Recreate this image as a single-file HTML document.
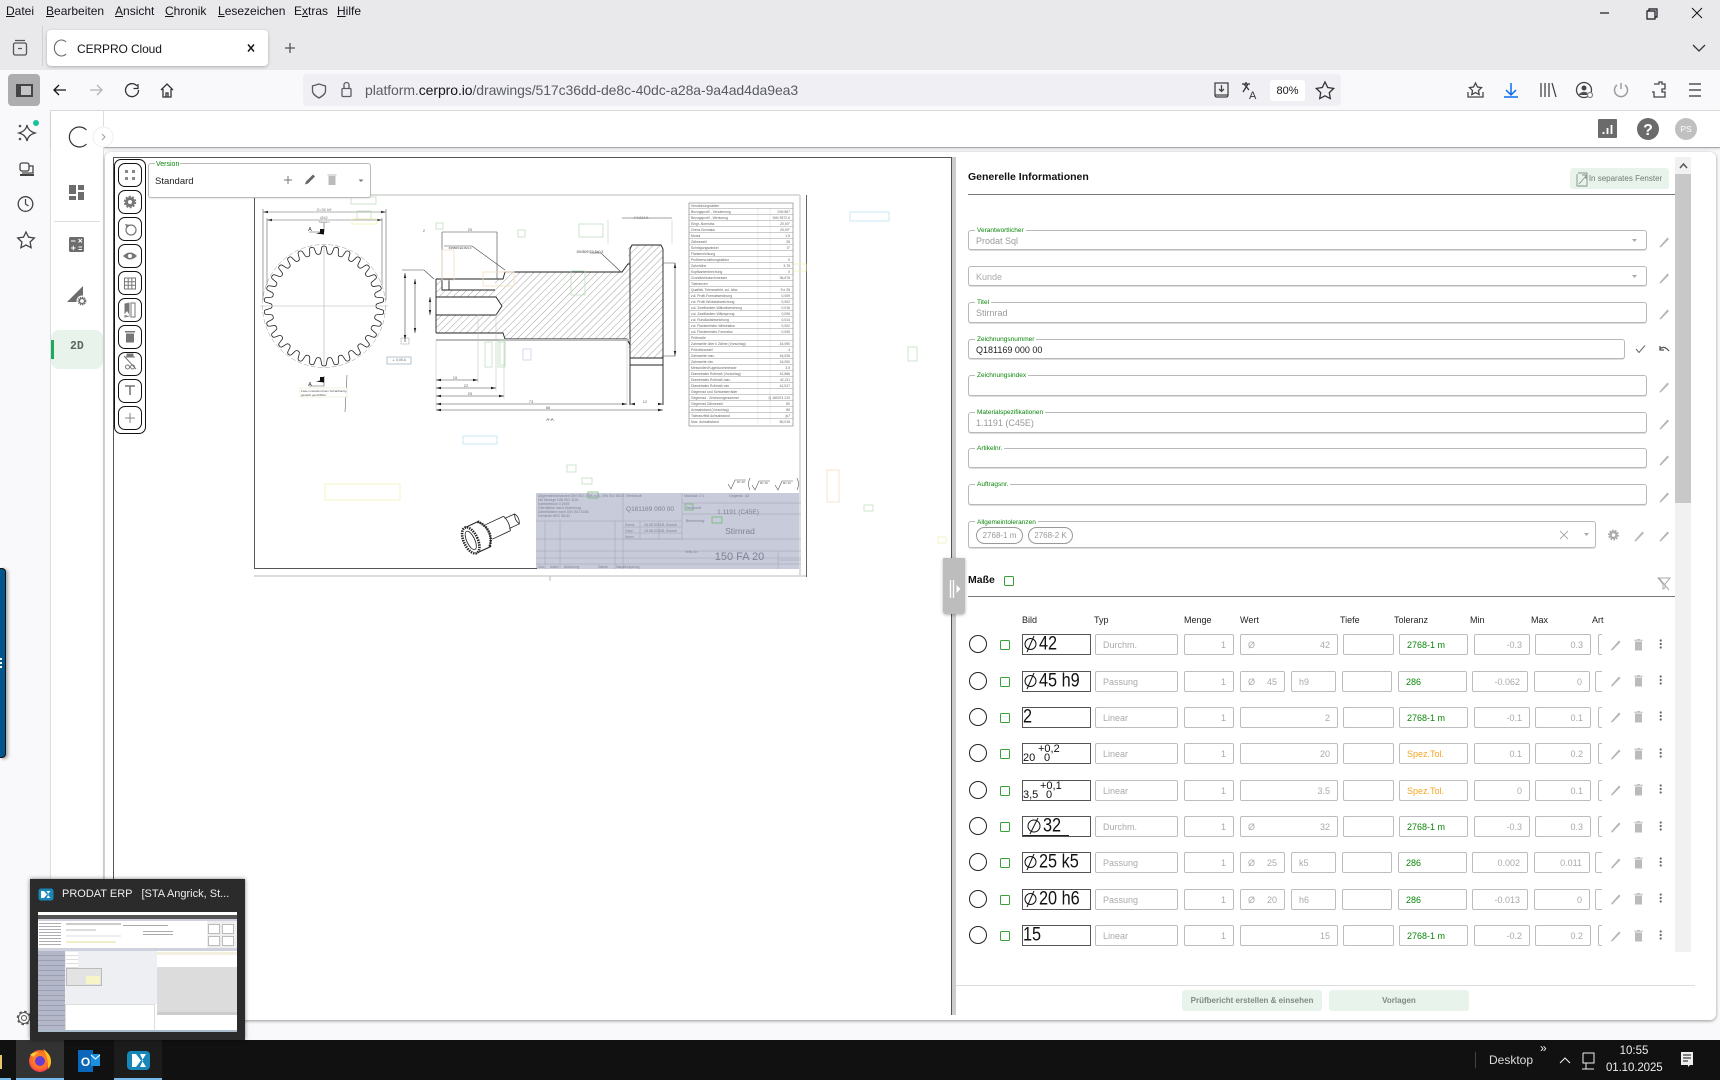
<!DOCTYPE html>
<html lang="de"><head><meta charset="utf-8"><title>CERPRO Cloud</title>
<style>
*{box-sizing:border-box}
html,body{margin:0;padding:0}
body{width:1720px;height:1080px;position:relative;overflow:hidden;background:#f9f9fb;font-family:"Liberation Sans",sans-serif;color:#222}
div,span.a{position:absolute}
.m{top:4px;font-size:12px;line-height:15px;color:#15141a}
.m u{text-decoration:underline}
.fld{left:968px;width:679px;border:1px solid #b9b9b9;border-radius:3px;background:#fff;font-size:9px;line-height:21px;padding-left:7px;color:#9a9a9a;box-shadow:0 1px 0 #ddd}
.fld i{position:absolute;left:6px;top:-4px;background:#fff;padding:0 2px;font-style:normal;font-size:6.5px;line-height:8px;color:#0a850a;white-space:nowrap}
.h{top:615px;font-size:9px;line-height:11px;color:#222}
.r{left:0;width:1720px;height:21px}
.b{top:0;height:21px;border:1px solid #bdbdbd;border-radius:2px;background:#fff;font-size:9px;line-height:20px;color:#aaa;padding:0 7px;white-space:nowrap;overflow:hidden}
.rt{text-align:right}
.ty{left:1095px;width:83px}.me{left:1184px;width:50px}.we{left:1240px;width:98px}.ti{left:1343px;width:51px}
.to{left:1399px;width:69px;color:#0a850a}.mi{left:1474px;width:56px}.ma{left:1535px;width:56px}
.w1{left:1240px;width:45px}.w2{left:1291px;width:45px}.t2{left:1342px;width:50px}.o2{left:1398px;width:69px;color:#0a850a}.i2{left:1472px;width:56px}.a2{left:1534px;width:56px}
.or{color:#f5a623}
.ar{left:1598px;width:4px;border-right:0;border-radius:2px 0 0 2px;padding:0}
.ar2{left:1595px;width:7px;border-right:0;border-radius:2px 0 0 2px;padding:0}
.im{left:1022px;width:69px;top:0;height:21px;border:1px solid #555;background:#fff;color:#111;overflow:hidden}
.im span{position:absolute;white-space:nowrap;font-size:17.5px;line-height:18px;top:-1px;transform:scale(.93,1.1);transform-origin:0 50%}
.im em{position:absolute;font-style:normal;white-space:nowrap;font-size:11px;line-height:11px}
.im svg{position:absolute;left:0;top:0}
.ci{left:969px;top:1px;width:18px;height:18px;border:1.3px solid #222;border-radius:50%;background:#fff}
.ck{left:1000px;top:6px;width:10px;height:10px;border:1.5px solid #3aa03a;border-radius:1.5px}
.ic{position:absolute}
.gb{background:#e8f3ec;border-radius:3px;color:#7f8a84;font-weight:bold;font-size:8px;text-align:center;line-height:21px}
</style></head><body>

<!-- browser chrome -->
<div style="left:0;top:0;width:1720px;height:70px;background:#e9e9ec"></div>
<div class="m" style="left:6px"><u>D</u>atei</div>
<div class="m" style="left:46px"><u>B</u>earbeiten</div>
<div class="m" style="left:115px"><u>A</u>nsicht</div>
<div class="m" style="left:165px"><u>C</u>hronik</div>
<div class="m" style="left:218px"><u>L</u>esezeichen</div>
<div class="m" style="left:294px">E<u>x</u>tras</div>
<div class="m" style="left:337px"><u>H</u>ilfe</div>
<div style="left:42px;top:26px;width:1px;height:40px;background:#cfcfd4"></div>
<div style="left:47px;top:30px;width:221px;height:36px;background:#fff;border-radius:4px;box-shadow:0 1px 3px rgba(0,0,0,.25)"></div>
<div style="left:77px;top:41px;font-size:12px;line-height:16px;color:#15141a;letter-spacing:-.1px">CERPRO Cloud</div>
<div style="left:0;top:70px;width:1720px;height:40px;background:#f9f9fb"></div>
<div style="left:8px;top:74px;width:32px;height:32px;background:#adadb0;border-radius:4px"></div>
<div style="left:303px;top:74px;width:1038px;height:32px;background:#f0f0f4;border-radius:4px"></div>
<div style="left:365px;top:82px;font-size:14px;line-height:17px;color:#5b5b66;white-space:nowrap;letter-spacing:-.08px">platform.<span style="color:#15141a">cerpro.io</span>/drawings/517c36dd-de8c-40dc-a28a-9a4ad4da9ea3</div>
<div style="left:1270px;top:80px;width:35px;height:21px;background:#fff;border-radius:3px;font-size:11px;line-height:22px;text-align:center;color:#15141a">80%</div>

<!-- page -->
<div style="left:50px;top:110px;width:1670px;height:930px;background:#f9f9fb;border-left:1px solid #ddd;border-top:1px solid #ddd"></div>
<div style="left:51px;top:111px;width:1669px;height:37px;background:#fff;border-bottom:1px solid #aaa;box-shadow:0 1px 2px rgba(0,0,0,.15)"></div>
<div style="left:51px;top:111px;width:53px;height:929px;background:#fff;border-right:1px solid #ddd"></div>
<div style="left:54px;top:221px;width:46px;height:1px;background:#ddd"></div>
<div style="left:51px;top:330px;width:52px;height:39px;background:#e8f3ec;border-radius:8px"></div>
<div style="left:51px;top:340px;width:3px;height:19px;background:#1fa860"></div>
<div style="left:70px;top:340px;font-size:11.5px;font-weight:bold;line-height:14px;color:#5a6660;font-family:'Liberation Mono',monospace">2D</div>
<div style="left:105px;top:152px;width:1611px;height:868px;background:#fff;border-radius:6px;box-shadow:0 1px 3px rgba(0,0,0,.4)"></div>
<div style="left:113px;top:157px;width:839px;height:858px;background:#fff;border:1px solid #555;border-bottom:0"></div>
<div style="left:952px;top:157px;width:4px;height:858px;background:#ccc"></div>

<!-- drawing title block backdrop -->
<div style="left:536px;top:493px;width:265px;height:76px;background:#c8cbda"></div>

<!-- Toolbar capsule -->
<div style="left:114px;top:159px;width:32px;height:275px;border:1.5px solid #111;border-radius:7px;background:#fff"></div>
<div style="left:118px;top:163px;width:24px;height:24px;border:1.2px solid #111;border-radius:7px"></div>
<div style="left:118px;top:190px;width:24px;height:24px;border:1.2px solid #111;border-radius:7px"></div>
<div style="left:118px;top:217px;width:24px;height:24px;border:1.2px solid #111;border-radius:7px"></div>
<div style="left:118px;top:244px;width:24px;height:24px;border:1.2px solid #111;border-radius:7px"></div>
<div style="left:118px;top:271px;width:24px;height:24px;border:1.2px solid #111;border-radius:7px"></div>
<div style="left:118px;top:298px;width:24px;height:24px;border:1.2px solid #111;border-radius:7px"></div>
<div style="left:118px;top:325px;width:24px;height:24px;border:1.2px solid #111;border-radius:7px"></div>
<div style="left:118px;top:352px;width:24px;height:24px;border:1.2px solid #111;border-radius:7px"></div>
<div style="left:118px;top:379px;width:24px;height:24px;border:1.2px solid #111;border-radius:7px"></div>
<div style="left:118px;top:406px;width:24px;height:24px;border:1.2px solid #111;border-radius:7px"></div>

<!-- Drawing SVG -->
<svg class="ic" style="left:0;top:0" width="1720" height="1080" viewBox="0 0 1720 1080" font-family="Liberation Sans, sans-serif">
<defs>
<path id="tooth" d="M-5.44-51.7Q-3.6-51.7-3.2-53.5L-2.3-58.5Q-1.9-60 0-60Q1.9-60 2.3-58.5L3.2-53.5Q3.6-51.7 5.44-51.7" fill="none" stroke="#222" stroke-width=".8"/>
<pattern id="hat" width="5" height="5" patternUnits="userSpaceOnUse" patternTransform="rotate(45)"><line x1="0" y1="0" x2="0" y2="5" stroke="#888" stroke-width=".8"/></pattern>
<g id="pen"><path d="M-4 5L3.5-3.5 5-2-2.8 6-4.6 6.600Z" fill="#b5b5b5"/></g>
<g id="trash"><path d="M-3.5-3.5h7V5.5h-7zM-4.3-5.2h8.6v1h-8.6zM-1.4-6h2.8v1h-2.8z" fill="#bbb"/></g>
<g id="dots" fill="#666"><circle cy="-3.5" r="1.1"/><circle r="1.1"/><circle cy="3.5" r="1.1"/></g>
<g id="car"><path d="M-2.5-1h5L0 2Z" fill="#aaa"/></g>
</defs>

<!-- sheet frame -->
<path d="M254 195H800M800 195V576M254 576H806" stroke="#ddd" stroke-width="2" fill="none"/>
<path d="M806.5 195V577" stroke="#666" stroke-width="1"/>
<path d="M254.5 195V568.5H537" stroke="#555" stroke-width="1" fill="none"/>
<path d="M550 576v5" stroke="#bbb"/>

<!-- gear -->
<g transform="translate(324 306)">
<use href="#tooth"/><use href="#tooth" transform="rotate(12)"/><use href="#tooth" transform="rotate(24)"/><use href="#tooth" transform="rotate(36)"/><use href="#tooth" transform="rotate(48)"/><use href="#tooth" transform="rotate(60)"/><use href="#tooth" transform="rotate(72)"/><use href="#tooth" transform="rotate(84)"/><use href="#tooth" transform="rotate(96)"/><use href="#tooth" transform="rotate(108)"/><use href="#tooth" transform="rotate(120)"/><use href="#tooth" transform="rotate(132)"/><use href="#tooth" transform="rotate(144)"/><use href="#tooth" transform="rotate(156)"/><use href="#tooth" transform="rotate(168)"/><use href="#tooth" transform="rotate(180)"/><use href="#tooth" transform="rotate(192)"/><use href="#tooth" transform="rotate(204)"/><use href="#tooth" transform="rotate(216)"/><use href="#tooth" transform="rotate(228)"/><use href="#tooth" transform="rotate(240)"/><use href="#tooth" transform="rotate(252)"/><use href="#tooth" transform="rotate(264)"/><use href="#tooth" transform="rotate(276)"/><use href="#tooth" transform="rotate(288)"/><use href="#tooth" transform="rotate(300)"/><use href="#tooth" transform="rotate(312)"/><use href="#tooth" transform="rotate(324)"/><use href="#tooth" transform="rotate(336)"/><use href="#tooth" transform="rotate(348)"/>
<circle r="61.5" fill="none" stroke="#999" stroke-width=".5" stroke-dasharray="5 2"/>
<path d="M-64 0H64" stroke="#ccc" stroke-width=".8"/><path d="M0-60V60" stroke="#bbb" stroke-width=".7"/>
</g>
<g stroke="#666" stroke-width=".6" fill="none">
<path d="M263 212H386M263 209V300M386 209V300"/>
<path d="M267 220H382M267 218V285"/><path d="M382 218V285"/>
<path d="M309 232h15v-10M324 376v10h-15" stroke="#555"/>
<path d="M347 375l-2 37"/>
</g>
<path d="M263 212l5-1.200v2.400zM386 212l-5-1.200v2.400zM267 220l5-1.200v2.400zM382 220l-5-1.200v2.400z" fill="#333"/>
<path d="M316 233.5l8-2v3zM316 381.5l8-2v3z" fill="#111"/><rect x="320" y="229" width="4" height="5" fill="#111"/><rect x="320" y="377" width="4" height="5" fill="#111"/>
<g font-size="4" fill="#777" text-anchor="middle">
<text x="324" y="211">Z=30 h9</text><text x="324" y="219">Ø42</text><text x="324" y="223" font-size="3">Toleranz</text>
<text x="310" y="231" font-size="5.500" fill="#333">A</text><text x="310" y="386" font-size="5.500" fill="#333">A</text>
</g>
<rect x="300" y="388" width="47" height="9" fill="#fff" stroke="#e6e8c8" stroke-width=".6"/>
<text x="301" y="392" font-size="3" fill="#555">Fase umlaufend kein Scharfkantig</text><text x="301" y="396" font-size="3" fill="#555">gewalzt geschliffen</text>

<!-- shaft -->
<path d="M436 279H503L505 272H622L628 264V245H663V358H630L627 339H505L503 333H436V315H496L502 306 496 297H436Z" fill="url(#hat)" stroke="none"/>
<path d="M442 279H495V290H442Z" fill="#fff"/>
<path d="M436 279V333M436 279H503L505 272H622L628 264H630V249L632 245H661L663 249V358M630 264V405M663 358V405M630 358H663M630 365H663M436 333H503L505 339H627L630 345M436 297H496L502 306 496 315H436M442 279V290H495M449 279V290" fill="none" stroke="#222" stroke-width=".9"/>
<path d="M436 340H630" stroke="#bbb" stroke-width="2"/>
<path d="M436 340V410M478 314V383M496 314V391M504 340V399M627 340V405M608 220v24M672 220v24" stroke="#bbb" stroke-width=".5" fill="none"/>
<g stroke="#444" stroke-width=".6" fill="none">
<path d="M436 380H478M436 388H496M436 396H504M436 404H627M436 410H663"/>
<path d="M405 273V340M415 279V333M430 297V315"/>
<path d="M442 232H497M442 232V279M497 232V279"/>
<path d="M402 270h22l10 9M444 246H472L505 270M590 253h11L621 272M663 263h12v93h-12"/>
<path d="M622 218H672"/>
</g>
<path d="M436 380l5-1.200v2.400zM478 380l-5-1.200v2.400zM436 388l5-1.200v2.400zM496 388l-5-1.200v2.400zM436 396l5-1.200v2.400zM504 396l-5-1.200v2.400zM436 404l5-1.200v2.400zM627 404l-5-1.200v2.400zM436 410l5-1.200v2.400zM663 410l-5-1.200v2.400zM630 404l5-1.200v2.400zM663 404l-5-1.200v2.400zM405 273l-1.200 5h2.400zM405 340l-1.200-5h2.400zM415 279l-1.200 5h2.400zM415 333l-1.200-5h2.400zM430 297l-1.200 5h2.400zM430 315l-1.200-5h2.400zM675 263l-1.200 5h2.400zM675 356l-1.200-5h2.400z" fill="#222"/>
<g font-size="4" fill="#666" text-anchor="middle">
<text x="455" y="379">15</text><text x="466" y="387">22</text><text x="470" y="395">25</text><text x="531" y="403">73</text><text x="548" y="409">88</text><text x="550" y="421" font-size="4.500" fill="#444">A-A</text>
<text x="645" y="403">12</text><text x="424" y="232">2</text><text x="470" y="231">20</text>
<text x="641" y="219" font-size="3.500">// 0,014 A</text><text x="590" y="253" font-size="3.500" fill="#444">DIN509 E0,8x0,3</text><text x="460" y="249" font-size="3" fill="#444">DIN509 E0,8x0,3</text>
<text x="399" y="361" font-size="3.500">⊥ 0,05 A</text><text x="405" y="342" font-size="3.500">A</text>
</g>
<rect x="387" y="357" width="24" height="7" fill="none" stroke="#6a8ca0" stroke-width=".5"/><rect x="401" y="338" width="8" height="6" fill="none" stroke="#888" stroke-width=".4"/>

<!-- colored annotation outlines -->
<g fill="none" stroke-width=".8">
<g stroke="#bfe0bf"><rect x="351" y="197" width="25" height="7"/><rect x="357" y="211" width="14" height="8"/><rect x="518" y="230" width="7" height="7"/><rect x="579" y="224" width="24" height="13"/><rect x="571" y="271" width="14" height="24"/><rect x="500" y="340" width="5" height="25"/><rect x="485" y="342" width="7" height="25"/><rect x="498" y="342" width="7" height="25"/><rect x="567" y="465" width="9" height="7"/><rect x="582" y="478" width="10" height="6"/><rect x="864" y="505" width="9" height="6"/><rect x="908" y="347" width="9" height="14"/><rect x="436" y="223" width="7" height="6"/></g>
<g stroke="#6fb96f"><rect x="588" y="492" width="10" height="6"/><rect x="685" y="504" width="8" height="6"/><rect x="712" y="517" width="10" height="6"/></g>
<g stroke="#bfe2f2"><rect x="850" y="212" width="39" height="9"/><rect x="463" y="436" width="34" height="8"/></g>
<g stroke="#f4f0b8"><rect x="325" y="484" width="75" height="16"/><rect x="352" y="219" width="25" height="5"/><rect x="938" y="537" width="8" height="6"/><rect x="758" y="264" width="48" height="7"/></g>
<g stroke="#f3dfc0"><rect x="827" y="470" width="12" height="32"/><rect x="442" y="250" width="12" height="30"/><rect x="483" y="272" width="31" height="14"/></g>
<g stroke="#dcc8ec"><rect x="523" y="349" width="8" height="11"/></g>
</g>

<!-- data table -->
<g>
<rect x="689" y="203" width="104" height="223" fill="#fff" stroke="#777" stroke-width=".6"/>
<path d="M758 208V426M770 208V426" stroke="#ddd" stroke-width=".5"/>
<path d="M689 208.500H793M689 214.500H793M689 220.500H793M689 226.500H793M689 232.500H793M689 238.500H793M689 244.500H793M689 250.500H793M689 256.500H793M689 262.500H793M689 268.500H793M689 274.500H793M689 280.500H793M689 286.500H793M689 292.500H793M689 298.500H793M689 304.500H793M689 310.500H793M689 316.500H793M689 322.500H793M689 328.500H793M689 334.500H793M689 340.500H793M689 346.500H793M689 352.500H793M689 358.500H793M689 364.500H793M689 370.500H793M689 376.500H793M689 382.500H793M689 388.500H793M689 394.500H793M689 400.500H793M689 406.500H793M689 412.500H793M689 418.500H793" stroke="#999" stroke-width=".5"/>
<text font-size="3.400" fill="#666"><tspan x="691" y="207">Verzahnungsdaten</tspan><tspan x="691" dy="6">Bezugsprofil - Verzahnung</tspan><tspan x="691" dy="6">Bezugsprofil - Werkzeug</tspan><tspan x="691" dy="6">Eingr.-Normalw.</tspan><tspan x="691" dy="6">Grenz-Normalw.</tspan><tspan x="691" dy="6">Modul</tspan><tspan x="691" dy="6">Zähnezahl</tspan><tspan x="691" dy="6">Schrägungswinkel</tspan><tspan x="691" dy="6">Flankenrichtung</tspan><tspan x="691" dy="6">Profilverschiebungsfaktor</tspan><tspan x="691" dy="6">Zahnhöhe</tspan><tspan x="691" dy="6">Kopfkantenbrechung</tspan><tspan x="691" dy="6">Grundkreisdurchmesser</tspan><tspan x="691" dy="6">Toleranzen</tspan><tspan x="691" dy="6">Qualität, Toleranzfeld, zul. Abw.</tspan><tspan x="691" dy="6">zul. Profil-Formabweichung</tspan><tspan x="691" dy="6">zul. Profil-Winkelabweichung</tspan><tspan x="691" dy="6">zul. Zweiflanken-Wälzabweichung</tspan><tspan x="691" dy="6">zul. Zweiflanken-Wälzsprung</tspan><tspan x="691" dy="6">zul. Rundlaufabweichung</tspan><tspan x="691" dy="6">zul. Flankenlinien-Winkelabw.</tspan><tspan x="691" dy="6">zul. Flankenlinien-Formabw.</tspan><tspan x="691" dy="6">Prüfmaße</tspan><tspan x="691" dy="6">Zahnweite über k Zähne (Vorschlag)</tspan><tspan x="691" dy="6">Prüfzähnezahl</tspan><tspan x="691" dy="6">Zahnweite max.</tspan><tspan x="691" dy="6">Zahnweite min.</tspan><tspan x="691" dy="6">Messrollen/Kugeldurchmesser</tspan><tspan x="691" dy="6">Diametrales Rollmaß (Vorschlag)</tspan><tspan x="691" dy="6">Diametrales Rollmaß max.</tspan><tspan x="691" dy="6">Diametrales Rollmaß min.</tspan><tspan x="691" dy="6">Gegenrad und Schwesterräder</tspan><tspan x="691" dy="6">Gegenrad - Zeichnungsnummer</tspan><tspan x="691" dy="6">Gegenrad Zähnezahl</tspan><tspan x="691" dy="6">Achsabstand (Vorschlag)</tspan><tspan x="691" dy="6">Toleranzfeld Achsabstand</tspan><tspan x="691" dy="6">Max. Achsabstand</tspan></text>
<text font-size="3.400" fill="#666" text-anchor="end"><tspan x="790" y="213">DIN 867</tspan><tspan x="790" dy="6">DIN 3972-II</tspan><tspan x="790" dy="6">20,00°</tspan><tspan x="790" dy="6">20,00°</tspan><tspan x="790" dy="6">1,5</tspan><tspan x="790" dy="6">26</tspan><tspan x="790" dy="6">0°</tspan><tspan x="790" dy="6">-</tspan><tspan x="790" dy="6">0</tspan><tspan x="790" dy="6">3,75</tspan><tspan x="790" dy="6">0</tspan><tspan x="790" dy="6">36,676</tspan><tspan x="790" dy="12">9 e 25</tspan><tspan x="790" dy="6">0,009</tspan><tspan x="790" dy="6">0,002</tspan><tspan x="790" dy="6">0,016</tspan><tspan x="790" dy="6">0,006</tspan><tspan x="790" dy="6">0,014</tspan><tspan x="790" dy="6">0,002</tspan><tspan x="790" dy="6">0,005</tspan><tspan x="790" dy="12">16,090</tspan><tspan x="790" dy="6">4</tspan><tspan x="790" dy="6">16,026</tspan><tspan x="790" dy="6">16,000</tspan><tspan x="790" dy="6">3,5</tspan><tspan x="790" dy="6">42,886</tspan><tspan x="790" dy="6">42,211</tspan><tspan x="790" dy="6">41,517</tspan><tspan x="790" dy="12">Q 180374 210</tspan><tspan x="790" dy="6">80</tspan><tspan x="790" dy="6">80</tspan><tspan x="790" dy="6">js7</tspan><tspan x="790" dy="6">80,015</tspan></text>
</g>

<!-- surface symbols -->
<g stroke="#555" stroke-width=".6" fill="none"><path d="M728 484l3 5 4-9h11M752 485l3 5 4-9h11M775 485l3 5 4-9h11M750 478q-3 6 0 12M797 478q3 6 0 12"/></g>
<g font-size="3" fill="#555"><text x="737" y="483">Rz 40</text><text x="760" y="484">Rz 16</text><text x="783" y="484">Rz 10</text></g>

<!-- pinion -->
<g transform="translate(478 537) rotate(-25)" fill="none" stroke="#222" stroke-width=".8">
<path d="M-8-14H6Q12-8 12 0T6 14H-8Z" fill="#fff"/>
<path d="M6-14Q12-8 12 0T6 14" stroke-width="2.600" stroke-dasharray="1.400 1"/>
<path d="M-8-14H6M-8 14H6M-5-14H8M-5 14H8" stroke-width="1"/>
<ellipse cx="-8" cy="0" rx="7" ry="14" fill="#fff" stroke-width="2.600" stroke-dasharray="1.400 1"/>
<ellipse cx="-8" cy="0" rx="4" ry="10"/>
<path d="M12-8H32M12 8H32M32-8Q35 0 32 8M32-5.500H43M32 5.500H43M43-5.500Q46 0 43 5.500Q40 0 43-5.500" fill="#fff"/>
</g>

<!-- title block -->
<g stroke="#9ea2b4" stroke-width=".5" fill="none"><path d="M536 539H801M623 493V569M682 493V539M536 551H801M536 558H801M536 564H801M623 539H682M545 521V569M560 521V569M615 521V569M536 521H682M659 521V539M640 521V539M623 527H682M623 533H682M682 514H801M682 503H801M778 551V569M778 560H801"/></g>
<g font-size="3.500" fill="#7f8294"><text x="538" y="497">Allgemeintoleranzen DIN ISO 2768-m-K, DIN ISO 8015 / Werkstoff:</text><text x="538" y="501">Die Bezüge DIN ISO 1101</text><text x="538" y="505">Kantenbruch 0,2x45</text><text x="538" y="509">Oberfläche nach Zeichnung</text><text x="538" y="513">Zahnflanken nach DIN ISO 6336</text><text x="538" y="517">Gehärtet HRC 58-62</text><text x="684" y="497">Maßstab: 2:1</text><text x="729" y="497">Gegenst.: A3</text><text x="686" y="509">Werkstoff:</text><text x="686" y="522">Benennung:</text><text x="685" y="553">Teile-Nr.:</text><text x="625" y="526">Konst.</text><text x="625" y="532">Gepr.</text><text x="625" y="538">Norm</text><text x="644" y="526">18.08.2016</text><text x="662" y="526">B. Brandt</text><text x="644" y="532">18.08.2016</text><text x="662" y="532">B. Brandt</text><text x="538" y="568">Zus.</text><text x="550" y="568">Index</text><text x="564" y="568">Änderung</text><text x="598" y="568">Datum</text><text x="616" y="568">Name</text><text x="625" y="568">Ursprung</text></g>
<g fill="#7f8294" text-anchor="middle"><text x="650" y="511" font-size="6.500">Q181169 000 00</text><text x="738" y="514" font-size="6.500">1.1191 (C45E)</text><text x="740" y="534" font-size="8.500">Stirnrad</text><text x="739.500" y="560" font-size="11">150 FA 20</text></g>

<!-- Chrome icons -->
<g fill="none" stroke="#5b5b66" stroke-width="1.300">
<path d="M15 40.500h10M13.500 45q0-2 2-2h9q2 0 2 2v8q0 2-2 2h-9q-2 0-2-2zM18 48.500h4" stroke="#555"/>
<rect x="17" y="85" width="15" height="11" fill="#c4c4c6" stroke="#444" stroke-width="2"/><rect x="17" y="85" width="4" height="11" fill="#444" stroke="none"/>
<path d="M66 90H54M59 85l-5 5 5 5" stroke="#15141a"/>
<path d="M90 90h12M97 85l5 5-5 5" stroke="#b4b4b8"/>
<path d="M137 86a6.500 6.500 0 1 0 1.500 4M138 84v4.500h-4.500" stroke="#333"/>
<path d="M161 90l6-6 6 6M163 89v8h8v-8M166 97v-4h2v4" stroke="#333"/>
<path d="M319 84l-6.500 2v5c0 3 3 5 6.500 7 3.500-2 6.500-4 6.500-7v-5z"/>
<rect x="342" y="88.500" width="9" height="8" rx="1"/><path d="M344 88v-3a2.500 2.500 0 0 1 5 0v3"/>
<path d="M1215 83h13v12h-13zM1215 95q0 2 2 2h9q2 0 2-2M1221.500 85v6M1219 89l2.500 2.500L1224 89" stroke="#444"/>
<path d="M1242 84h8M1246 82v2M1243 92l5-8M1244 84l5 6" stroke="#333"/>
<text x="1249" y="99" font-size="11" fill="#333" stroke="none">A</text>
<path d="M1325 82l2.700 5.500 6 .9-4.400 4.200 1 6-5.300-2.800-5.300 2.800 1-6-4.400-4.200 6-.9z" stroke="#333"/>
<path d="M1475.500 83l2 4 4 .6-3 3 .7 4-3.700-2-3.700 2 .7-4-3-3 4-.6zM1468 92v5h15v-5" stroke="#444"/>
<path d="M1511 83v11M1506 90l5 5 5-5M1504 97h14" stroke="#0b6cf0" stroke-width="1.500"/>
<path d="M1541 83v14M1545 83v14M1549 83v14M1552 83l4 14" stroke="#444"/>
<circle cx="1584" cy="90" r="7.500" stroke="#444"/><circle cx="1584" cy="88" r="2.500" fill="#444" stroke="none"/><path d="M1579 95q5-5 10 0" fill="#444"/><circle cx="1590" cy="95" r="2.500" fill="#fff" stroke="#888"/>
<path d="M1621 83v6M1617 85a6.500 6.500 0 1 0 8 0" stroke="#9c9ca0" stroke-width="1.500"/>
<path d="M1654 84h5v-2h3v2h3v5h-3v3h3v5h-11v-5h-2" stroke="#444"/>
<path d="M1689 84h12M1689 90h12M1689 96h12" stroke="#333"/>
<path d="M1600 13h9" stroke="#15141a" stroke-width="1.200"/>
<path d="M1647 11h8v8h-8zM1649 11V9h8v8h-2" stroke="#15141a" stroke-width="1.200"/>
<path d="M1692 8l10 10M1702 8l-10 10" stroke="#15141a" stroke-width="1"/>
<path d="M1693 45l6 6 6-6" stroke="#333"/>
<path d="M285 48h10M290 43v10" stroke="#555"/>
<path d="M248 44.500l6 7M254 44.500l-6 7" stroke="#15141a" stroke-width="1.500"/>
<path d="M66 42a7 8 0 1 0 0 12" stroke="#666" stroke-width="1.100"/>
</g>

<!-- firefox sidebar -->
<path d="M26 125q1 6 8 8-7 2-8 8-1-6-8-8 7-2 8-8z" fill="none" stroke="#444" stroke-width="1.300" transform="translate(1 0)"/>
<circle cx="20" cy="126" r="1.300" fill="#555"/><circle cx="20" cy="139" r="1.300" fill="#555"/><circle cx="36" cy="123" r="3" fill="#1ac19a"/>
<g fill="none" stroke="#444" stroke-width="1.300"><rect x="20" y="163" width="9" height="8" rx="2"/><path d="M29 166h4v7H22"/></g><path d="M20 174h14v2h-14z" fill="#444"/>
<circle cx="25.500" cy="204" r="7.300" fill="none" stroke="#444" stroke-width="1.300"/><path d="M25.500 199v5l3 2" fill="none" stroke="#444" stroke-width="1.200"/>
<path d="M26 232l2.500 5.200 5.800.8-4.200 4 1 5.700-5.100-2.700-5.100 2.700 1-5.700-4.200-4 5.800-.8z" fill="none" stroke="#444" stroke-width="1.300"/>

<!-- app rail -->
<path d="M86.500 130A10 10 0 1 0 86.500 144" fill="none" stroke="#333" stroke-width="1.200"/>
<circle cx="103" cy="137" r="10" fill="#fff" stroke="#eee" stroke-width="1"/><path d="M102 134l3 3-3 3" fill="none" stroke="#999" stroke-width=".9"/>
<path d="M69 185h7v9h-7zM78 185h6v5h-6zM78 192h6v8h-6zM69 196h7v4h-7z" fill="#6d6d6d"/>
<rect x="69" y="237" width="15" height="15" rx="1.500" fill="#6d6d6d"/><path d="M71 241h4.500M78.500 239l3.500 3.500M82 239l-3.500 3.500M71 248h4.500M73.300 245.800v4.400M78.500 247h3.500M78.500 249.500h3.500" stroke="#fff" stroke-width="1"/>
<path d="M67 302L83 286V298A11 11 0 0 0 78 302Z" fill="#6d6d6d"/><circle cx="82" cy="301" r="5.500" fill="#fff"/><circle cx="82" cy="301" r="3.600" fill="none" stroke="#6d6d6d" stroke-width="1.600" stroke-dasharray="1.300 .8"/><circle cx="82" cy="301" r="2.500" fill="none" stroke="#6d6d6d" stroke-width="1.200"/>

<!-- toolbar icons -->
<g fill="#777" stroke="none">
<path d="M125 170h3v3h-3zM132 170h3v3h-3zM125 177h3v3h-3zM132 177h3v3h-3z" fill="#888"/>
<circle cx="130" cy="202" r="3.500" fill="none" stroke="#777" stroke-width="3"/><circle cx="130" cy="202" r="5.500" fill="none" stroke="#777" stroke-width="1.500" stroke-dasharray="2 1.500"/>
<circle cx="131" cy="230" r="5" fill="none" stroke="#777" stroke-width="1.200"/><path d="M125 224l5 1-3 3z"/>
<path d="M123 256q7-7 14 0q-7 7-14 0z"/><circle cx="130" cy="256" r="2" fill="#fff"/>
<g fill="none" stroke="#777"><rect x="124.500" y="278" width="11" height="11"/><path d="M124.500 281.700h11M124.500 285.300h11M128.200 278v11M131.800 278v11"/></g>
<path d="M125 304l4-1v13l-4 1zM131 303h4v14h-4z" fill="none" stroke="#777"/><path d="M125 304h4v12h-4z"/><path d="M124 315l3-4 2 3v2z" fill="#fff"/>
<path d="M126 333.500h8v9h-8zM125 331h10v1.500h-10z"/>
<path d="M125 357h10M127 354h6v3h-6z" stroke="#777"/><circle cx="127.500" cy="367" r="2" fill="none" stroke="#777"/><circle cx="132.500" cy="367" r="2" fill="none" stroke="#777"/><path d="M124 356l12 13" stroke="#777" fill="none"/>
<path d="M125 386h10M130 386v9" stroke="#777" stroke-width="1.600"/>
<path d="M125 418h10M130 413v10" stroke="#888" stroke-width="1"/>
</g>

<!-- header icons -->
<rect x="1598" y="119" width="19" height="19" rx="1" fill="#6b6b6b"/><path d="M1603.500 134v-2M1607.500 134v-6M1611.500 134v-9" stroke="#fff" stroke-width="1.800"/>
<circle cx="1648" cy="129" r="11" fill="#6b6b6b"/><text x="1648" y="135" font-size="16" font-weight="bold" fill="#fff" text-anchor="middle">?</text>
<circle cx="1686" cy="129" r="11" fill="#c0c0c0"/><text x="1686" y="132" font-size="8.500" fill="#fff" text-anchor="middle">PS</text>

<!-- scrollbar -->
<rect x="1675" y="157" width="16" height="795" fill="#f1f1f1"/><rect x="1675" y="174" width="16" height="329" fill="#c8c8c8"/><path d="M1680 168l3.500-4 3.500 4" fill="none" stroke="#555" stroke-width="1.500"/>

<!-- right panel lines -->
<path d="M968 194.500H1675M968 596.500H1675" stroke="#777" stroke-width="1"/>
<path d="M956 985.500H1695" stroke="#ddd" stroke-width="1"/>
<use href="#pen" x="1664" y="241"/><use href="#pen" x="1664" y="277"/><use href="#pen" x="1664" y="313"/><use href="#pen" x="1664" y="386"/><use href="#pen" x="1664" y="423"/><use href="#pen" x="1664" y="459"/><use href="#pen" x="1664" y="496"/><use href="#pen" x="1664" y="535"/>
<path d="M1636 349l3 3.500 6-7" fill="none" stroke="#666" stroke-width="1"/>
<path d="M1660 349q4-4 9 2M1660 346v4h4" fill="none" stroke="#555" stroke-width="1.300"/>
<path d="M1658 578h12l-5 6v4l-2 1v-5zM1659 578l10 12" fill="none" stroke="#aaa" stroke-width="1"/>

<!-- gear sidebar -->
<circle cx="24" cy="1018" r="2.500" fill="none" stroke="#555" stroke-width="1"/><circle cx="24" cy="1018" r="5.500" fill="none" stroke="#555" stroke-width="1"/><circle cx="24" cy="1018" r="6.500" fill="none" stroke="#555" stroke-width="1.500" stroke-dasharray="2.500 2.600"/>
</svg>

<!-- Version box -->
<div style="left:148px;top:163px;width:223px;height:35px;background:#fff;border:1px solid #bbb;border-radius:3px;font-size:9.500px;line-height:36px;padding-left:6px;color:#222;box-shadow:0 1px 1px rgba(0,0,0,.08)">Standard<i style="position:absolute;left:6px;top:-3px;background:#fff;padding:0 1px;font-style:normal;font-size:7px;line-height:8px;color:#0a850a">Version</i></div>
<svg class="ic" style="left:280px;top:170px" width="90" height="20"><path d="M4 10h8M8 6v8" stroke="#777"/><path d="M25 14.500l1-3 7-7 2 2-7 7z" fill="#666"/><path d="M48.500 6h7V15h-7zM47.500 4.500h9v1h-9z" fill="#bbb"/><path d="M78.500 9.500h5l-2.500 2.500z" fill="#777"/></svg>

<!-- Right panel text -->
<div style="left:968px;top:171px;font-size:10.500px;font-weight:bold;line-height:13px;color:#111">Generelle Informationen</div>
<div class="gb" style="left:1570px;top:168px;width:99px;height:21px;padding-left:12px;font-weight:normal;color:#6f7a74">In separates Fenster</div>
<svg class="ic" style="left:1570px;top:168px" width="20" height="21"><path d="M8 5h9v13H7V6M9 16l7-8M12 7h4v4" fill="none" stroke="#87918b" stroke-width=".9"/></svg>

<div class="fld" style="top:230px;height:20px"><i>Verantwortlicher</i>Prodat Sql</div>
<div class="fld" style="top:266px;height:20px;color:#aaa">Kunde</div>
<div class="fld" style="top:302px;height:21px"><i>Titel</i>Stirnrad</div>
<div class="fld" style="top:339px;height:20px;width:657px;color:#222"><i>Zeichnungsnummer</i>Q181169 000 00</div>
<div class="fld" style="top:375px;height:21px"><i>Zeichnungsindex</i></div>
<div class="fld" style="top:412px;height:21px"><i>Materialspezifikationen</i>1.1191 (C45E)</div>
<div class="fld" style="top:448px;height:20px"><i>Artikelnr.</i></div>
<div class="fld" style="top:484px;height:21px"><i>Auftragsnr.</i></div>
<div class="fld" style="top:521px;height:27px;width:628px"><i style="top:-3px">Allgemeintoleranzen</i></div>
<div style="left:976px;top:527px;width:47px;height:17px;border:1px solid #999;border-radius:9px;font-size:8px;line-height:15px;text-align:center;color:#999;background:#fff">2768-1 m</div>
<div style="left:1028px;top:527px;width:45px;height:17px;border:1px solid #999;border-radius:9px;font-size:8px;line-height:15px;text-align:center;color:#999;background:#fff">2768-2 K</div>
<svg class="ic" style="left:1555px;top:526px" width="20" height="18"><path d="M5 5l8 8M13 5l-8 8" stroke="#aaa" stroke-width=".9"/></svg>
<svg class="ic" style="left:1580px;top:530px" width="14" height="10"><path d="M4 3h5L6.500 6z" fill="#aaa"/></svg>
<svg class="ic" style="left:1628px;top:230px" width="14" height="20"><path d="M4 9h5L6.500 12z" fill="#aaa"/></svg>
<svg class="ic" style="left:1628px;top:266px" width="14" height="20"><path d="M4 9h5L6.500 12z" fill="#aaa"/></svg>
<svg class="ic" style="left:1605px;top:525px" width="70" height="20"><circle cx="8.500" cy="10" r="3" fill="none" stroke="#aaa" stroke-width="2.400"/><circle cx="8.500" cy="10" r="4.800" fill="none" stroke="#aaa" stroke-width="1.400" stroke-dasharray="1.700 1.300"/><path d="M30 15L37.500 6.500 39 8 31.200 16 29.400 16.600Z" fill="#b5b5b5"/></svg>

<div style="left:968px;top:574px;font-size:10.500px;font-weight:bold;line-height:13px;color:#111">Maße</div>
<div style="left:1004px;top:576px;width:10px;height:10px;border:1.500px solid #3aa03a;border-radius:1.500px"></div>
<div style="left:943px;top:558px;width:22px;height:56px;background:#bdbdbd;border-radius:0 0 3px 3px;box-shadow:0 1px 3px rgba(0,0,0,.3)"></div>
<svg class="ic" style="left:943px;top:558px" width="22" height="56"><path d="M7.500 22v18M10.500 22v18" stroke="#fff" stroke-width="1.300"/><path d="M13.500 27l4 4-4 4z" fill="#fff"/></svg>

<div class="h" style="left:1022px">Bild</div><div class="h" style="left:1094px">Typ</div><div class="h" style="left:1184px">Menge</div><div class="h" style="left:1240px">Wert</div><div class="h" style="left:1340px">Tiefe</div><div class="h" style="left:1394px">Toleranz</div><div class="h" style="left:1470px">Min</div><div class="h" style="left:1531px">Max</div><div class="h" style="left:1592px">Art</div>

<!-- Rows -->
<div class="r" style="top:634px"><div class="ci"></div><div class="ck"></div>
<div class="im"><svg width="15" height="18"><circle cx="7.500" cy="9" r="5.500" fill="none" stroke="#111"/><path d="M11 1L4 17" stroke="#111"/></svg><span style="left:16px">42</span></div>
<div class="b ty">Durchm.</div><div class="b me rt">1</div><div class="b we"><span style="float:right">42</span>Ø</div><div class="b ti"></div><div class="b to">2768-1 m</div><div class="b mi rt">-0.3</div><div class="b ma rt">0.3</div><div class="b ar"></div></div>

<div class="r" style="top:671px"><div class="ci"></div><div class="ck"></div>
<div class="im"><svg width="15" height="18"><circle cx="7.500" cy="9" r="5.500" fill="none" stroke="#111"/><path d="M11 1L4 17" stroke="#111"/></svg><span style="left:16px">45 h9</span></div>
<div class="b ty">Passung</div><div class="b me rt">1</div><div class="b w1"><span style="float:right">45</span>Ø</div><div class="b w2">h9</div><div class="b t2"></div><div class="b o2">286</div><div class="b i2 rt">-0.062</div><div class="b a2 rt">0</div><div class="b ar2"></div></div>

<div class="r" style="top:707px"><div class="ci"></div><div class="ck"></div>
<div class="im"><span style="left:0">2</span></div>
<div class="b ty">Linear</div><div class="b me rt">1</div><div class="b we rt">2</div><div class="b ti"></div><div class="b to">2768-1 m</div><div class="b mi rt">-0.1</div><div class="b ma rt">0.1</div><div class="b ar"></div></div>

<div class="r" style="top:743px"><div class="ci"></div><div class="ck"></div>
<div class="im"><em style="left:15px;top:0">+0,2</em><em style="left:0;top:9px">20</em><em style="left:21px;top:9px">0</em></div>
<div class="b ty">Linear</div><div class="b me rt">1</div><div class="b we rt">20</div><div class="b ti"></div><div class="b to or">Spez.Tol.</div><div class="b mi rt">0.1</div><div class="b ma rt">0.2</div><div class="b ar"></div></div>

<div class="r" style="top:780px"><div class="ci"></div><div class="ck"></div>
<div class="im"><em style="left:17px;top:0">+0,1</em><em style="left:0;top:9px">3,5</em><em style="left:23px;top:9px">0</em></div>
<div class="b ty">Linear</div><div class="b me rt">1</div><div class="b we rt">3.5</div><div class="b ti"></div><div class="b to or">Spez.Tol.</div><div class="b mi rt">0</div><div class="b ma rt">0.1</div><div class="b ar"></div></div>

<div class="r" style="top:816px"><div class="ci"></div><div class="ck"></div>
<div class="im"><svg width="20" height="18" style="left:3px"><circle cx="8" cy="9" r="6" fill="none" stroke="#111"/><path d="M12 1L4 17" stroke="#111"/></svg><span style="left:20px">32</span><em style="left:0;top:18px;width:46px;height:1.500px;background:#222"></em></div>
<div class="b ty">Durchm.</div><div class="b me rt">1</div><div class="b we"><span style="float:right">32</span>Ø</div><div class="b ti"></div><div class="b to">2768-1 m</div><div class="b mi rt">-0.3</div><div class="b ma rt">0.3</div><div class="b ar"></div></div>

<div class="r" style="top:852px"><div class="ci"></div><div class="ck"></div>
<div class="im"><svg width="15" height="18"><circle cx="7.500" cy="9" r="5.500" fill="none" stroke="#111"/><path d="M11 1L4 17" stroke="#111"/></svg><span style="left:16px">25 k5</span></div>
<div class="b ty">Passung</div><div class="b me rt">1</div><div class="b w1"><span style="float:right">25</span>Ø</div><div class="b w2">k5</div><div class="b t2"></div><div class="b o2">286</div><div class="b i2 rt">0.002</div><div class="b a2 rt">0.011</div><div class="b ar2"></div></div>

<div class="r" style="top:889px"><div class="ci"></div><div class="ck"></div>
<div class="im"><svg width="15" height="18"><circle cx="7.500" cy="9" r="5.500" fill="none" stroke="#111"/><path d="M11 1L4 17" stroke="#111"/></svg><span style="left:16px">20 h6</span></div>
<div class="b ty">Passung</div><div class="b me rt">1</div><div class="b w1"><span style="float:right">20</span>Ø</div><div class="b w2">h6</div><div class="b t2"></div><div class="b o2">286</div><div class="b i2 rt">-0.013</div><div class="b a2 rt">0</div><div class="b ar2"></div></div>

<div class="r" style="top:925px"><div class="ci"></div><div class="ck"></div>
<div class="im"><span style="left:0">15</span></div>
<div class="b ty">Linear</div><div class="b me rt">1</div><div class="b we rt">15</div><div class="b ti"></div><div class="b to">2768-1 m</div><div class="b mi rt">-0.2</div><div class="b ma rt">0.2</div><div class="b ar"></div></div>

<svg class="ic" style="left:1605px;top:630px" width="65" height="320">
<g transform="translate(-1605 -630)">
<use href="#pen" x="1615.500" y="644"/><use href="#trash" x="1638.500" y="645"/><use href="#dots" x="1660.700" y="644"/>
<use href="#pen" x="1615.500" y="680"/><use href="#trash" x="1638.500" y="681"/><use href="#dots" x="1660.700" y="680"/>
<use href="#pen" x="1615.500" y="716"/><use href="#trash" x="1638.500" y="717"/><use href="#dots" x="1660.700" y="716"/>
<use href="#pen" x="1615.500" y="753"/><use href="#trash" x="1638.500" y="754"/><use href="#dots" x="1660.700" y="753"/>
<use href="#pen" x="1615.500" y="789"/><use href="#trash" x="1638.500" y="790"/><use href="#dots" x="1660.700" y="789"/>
<use href="#pen" x="1615.500" y="826"/><use href="#trash" x="1638.500" y="827"/><use href="#dots" x="1660.700" y="826"/>
<use href="#pen" x="1615.500" y="862"/><use href="#trash" x="1638.500" y="863"/><use href="#dots" x="1660.700" y="862"/>
<use href="#pen" x="1615.500" y="898"/><use href="#trash" x="1638.500" y="899"/><use href="#dots" x="1660.700" y="898"/>
<use href="#pen" x="1615.500" y="935"/><use href="#trash" x="1638.500" y="936"/><use href="#dots" x="1660.700" y="935"/>
</g></svg>

<div class="gb" style="left:1182px;top:990px;width:140px;height:21px">Prüfbericht erstellen &amp; einsehen</div>
<div class="gb" style="left:1329px;top:990px;width:140px;height:21px">Vorlagen</div>

<!-- left edge window -->
<div style="left:0;top:568px;width:6px;height:190px;background:#00558c;border:1px solid #111;border-left:0;border-radius:0 4px 4px 0;box-shadow:2px 1px 3px rgba(0,0,0,.35)"></div>
<div style="left:0;top:658px;width:2px;height:2px;background:#fff;box-shadow:0 4px 0 #fff,0 8px 0 #fff"></div>

<!-- Taskbar -->
<div style="left:0;top:1040px;width:1720px;height:40px;background:#111"></div>
<div style="left:0;top:1055px;width:2px;height:14px;background:#e8c56a"></div>
<div style="left:0;top:1078px;width:11px;height:2px;background:#76b9ed"></div>
<div style="left:16px;top:1040px;width:48px;height:40px;background:#333"></div>
<div style="left:16px;top:1078px;width:48px;height:2px;background:#76b9ed"></div>
<div style="left:114px;top:1040px;width:48px;height:40px;background:#1c1c1c"></div>
<div style="left:114px;top:1078px;width:48px;height:2px;background:#76b9ed"></div>
<div style="left:1489px;top:1052px;font-size:12px;line-height:16px;color:#ddd">Desktop</div>
<div style="left:1475px;top:1052px;width:1px;height:16px;background:#444"></div>
<div style="left:1540px;top:1041px;font-size:12px;line-height:14px;color:#eee">»</div>
<div style="left:1608px;top:1044px;width:52px;text-align:center;font-size:11.500px;line-height:15px;color:#eee">10:55</div>
<div style="left:1606px;top:1061px;width:56px;text-align:center;font-size:11.500px;line-height:15px;color:#eee;letter-spacing:-.1px">01.10.2025</div>
<svg class="ic" style="left:0;top:1040px" width="1720" height="40">
<defs><radialGradient id="ff" cx=".5" cy=".45" r=".6"><stop offset="0" stop-color="#ff9a1f"/><stop offset=".7" stop-color="#ff6a2b"/><stop offset="1" stop-color="#e2236a"/></radialGradient></defs>
<circle cx="40" cy="21" r="11" fill="url(#ff)"/><path d="M43 9q8 5 8 13 0 4-3 7 1-10-5-20z" fill="#ffbd1f"/><circle cx="40" cy="21" r="5" fill="#6a3bd1"/><path d="M30 15q4-4 9-2-4 1-5 4z" fill="#ffc93a"/>
<rect x="78" y="10" width="15" height="22" fill="#0a66b8"/><text x="85.500" y="26" font-size="12" font-weight="bold" fill="#fff" text-anchor="middle">O</text><rect x="91" y="14" width="9" height="12" fill="#1b90dd"/><path d="M91 15l4.500 4 4.500-4" fill="none" stroke="#fff"/>
<rect x="127" y="11" width="23" height="19" rx="4" fill="#1887b8"/><path d="M132 14h4l5 6.500-5 6.500h-4zM140 14h6l-4 6.500 4 6.500h-6l3-6.500z" fill="#fff"/>
<path d="M1560 23l5-5 5 5" fill="none" stroke="#eee" stroke-width="1.100"/>
<path d="M1583 13h11v10h-8v6h8M1583 13v10h3M1582 29h12" fill="none" stroke="#eee" stroke-width="1"/>
<path d="M1681 12h12v13h-3l-2 2v-2h-7z" fill="#eee"/><path d="M1683 15h8M1683 18h8M1683 21h5" stroke="#111" stroke-width="1"/>
</svg>

<!-- thumbnail popup -->
<div style="left:30px;top:879px;width:215px;height:161px;background:#2b2b2b;box-shadow:0 0 4px rgba(0,0,0,.5)"></div>
<svg class="ic" style="left:38px;top:888px" width="18" height="15"><rect x=".500" y=".500" width="15" height="12" rx="2.500" fill="#1887b8"/><path d="M3 3h3l3 3.500-3 3.500h-3zM8.500 3h4l-3 3.500 3 3.500h-4l2-3.500z" fill="#fff"/></svg>
<div style="left:62px;top:887px;font-size:11px;line-height:15px;color:#eee;white-space:pre">PRODAT ERP   [STA Angrick, St...</div>
<div style="left:38px;top:912px;width:199px;height:120px;background:#fff;overflow:hidden">
<div style="left:0;top:3px;width:199px;height:4px;background:#555"></div>
<div style="left:0;top:7px;width:199px;height:2px;background:#cfd2dc"></div>
<div style="left:169px;top:9px;width:30px;height:27px;background:#eee"></div>
<div style="left:170px;top:12px;width:12px;height:10px;background:#fff;border:1px solid #bbb"></div><div style="left:184px;top:12px;width:12px;height:10px;background:#fff;border:1px solid #bbb"></div>
<div style="left:170px;top:24px;width:12px;height:10px;background:#fff;border:1px solid #bbb"></div><div style="left:184px;top:24px;width:12px;height:10px;background:#fff;border:1px solid #bbb"></div>
<div style="left:1px;top:11px;width:22px;height:24px;background:repeating-linear-gradient(#8a8a92 0 1px,#fff 1px 3px);opacity:.7"></div>
<div style="left:28px;top:11px;width:55px;height:2px;background:#ccc"></div><div style="left:28px;top:17px;width:30px;height:2px;background:#ddd"></div><div style="left:28px;top:23px;width:55px;height:2px;background:#eee"></div><div style="left:28px;top:29px;width:50px;height:2px;background:#f0f0c8"></div>
<div style="left:85px;top:13px;width:45px;height:1px;background:#aaa"></div><div style="left:105px;top:19px;width:30px;height:1px;background:#aaa"></div><div style="left:105px;top:22px;width:30px;height:1px;background:#aaa"></div>
<div style="left:0;top:36px;width:199px;height:3px;background:#cfd2dc"></div>
<div style="left:0;top:39px;width:27px;height:81px;background:repeating-linear-gradient(#b4b7c8 0 4px,#9aa0b4 4px 5px)"></div>
<div style="left:27px;top:39px;width:92px;height:53px;background:#eeeff3"></div>
<div style="left:28px;top:40px;width:12px;height:16px;background:repeating-linear-gradient(#fff 0 3px,#ddd 3px 4px)"></div>
<div style="left:27px;top:92px;width:90px;height:28px;background:#fff;border:1px solid #ddd"></div>
<div style="left:28px;top:56px;width:36px;height:18px;background:#e3e3e3;border:1px solid #bbb"></div><div style="left:48px;top:64px;width:14px;height:8px;background:#f5f5c8"></div>
<div style="left:119px;top:39px;width:80px;height:16px;background:#fff"></div><div style="left:119px;top:40px;width:80px;height:3px;background:#f3eedd"></div>
<div style="left:119px;top:55px;width:80px;height:45px;background:#dcdcdc"></div>
<div style="left:119px;top:100px;width:80px;height:20px;background:#fff"></div>
<div style="left:119px;top:100px;width:80px;height:3px;background:#ccc"></div>
<div style="left:0;top:118px;width:199px;height:2px;background:#aabbcc"></div>
</div>
</body></html>
